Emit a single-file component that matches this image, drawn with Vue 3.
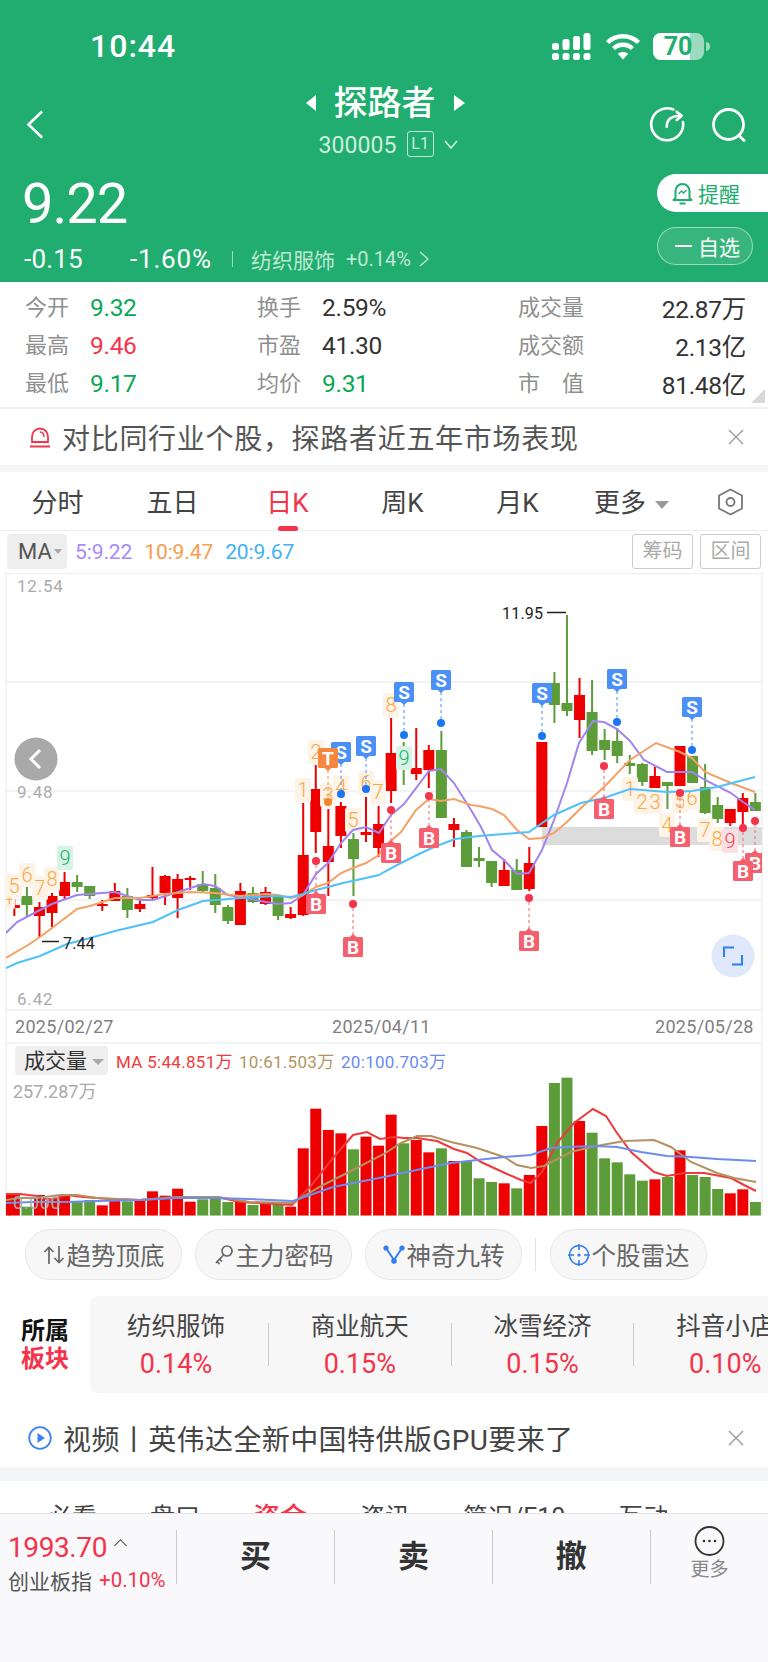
<script setup>
const stats = [
  { label: '今开', value: '9.32', tone: 'up', label2: '换手', value2: '2.59%', tone2: '', label3: '成交量', value3: '22.87万' },
  { label: '最高', value: '9.46', tone: 'down', label2: '市盈', value2: '41.30', tone2: '', label3: '成交额', value3: '2.13亿' },
  { label: '最低', value: '9.17', tone: 'up', label2: '均价', value2: '9.31', tone2: 'up', label3: '市　值', value3: '81.48亿' },
];
const periods = ['分时', '五日', '日K', '周K', '月K'];
const boards = [
  { name: '纺织服饰', pct: '0.14%' },
  { name: '商业航天', pct: '0.15%' },
  { name: '冰雪经济', pct: '0.15%' },
  { name: '抖音小店', pct: '0.10%' },
];

const cx = (i) => 14.33 + 12.56 * i;

// type, high, body top, body bottom, low
const candles = [
  ['r', 899, 905, 908, 916], ['g', 887, 896, 905, 917], ['r', 902, 907, 916, 937], ['r', 893, 896, 913, 927],
  ['r', 872, 882, 896, 899], ['g', 875, 882, 887, 892], ['g', 886, 886, 896, 899], ['r', 900, 904, 906, 911],
  ['r', 883, 891, 901, 901], ['g', 888, 896, 910, 918], ['r', 898, 904, 909, 912], ['r', 867, 895, 898, 899],
  ['r', 875, 876, 893, 905], ['r', 874, 879, 898, 918], ['r', 876, 878, 880, 890], ['g', 871, 884, 891, 892],
  ['g', 874, 888, 905, 913], ['g', 905, 907, 921, 924], ['r', 883, 891, 925, 925], ['g', 887, 893, 902, 903],
  ['r', 887, 892, 904, 905], ['g', 895, 896, 916, 920], ['r', 907, 914, 918, 919], ['r', 803, 855, 915, 916],
  ['r', 765, 789, 832, 853], ['r', 809, 846, 862, 896], ['r', 802, 806, 836, 848], ['g', 833, 839, 859, 896],
  ['r', 797, 832, 835, 842], ['r', 806, 824, 848, 857], ['r', 718, 753, 791, 803], ['g', 742, 750, 758, 785],
  ['r', 728, 768, 774, 780], ['r', 745, 750, 770, 788], ['g', 731, 750, 818, 818], ['r', 818, 824, 830, 847],
  ['g', 830, 832, 867, 867], ['g', 847, 858, 861, 867], ['g', 861, 861, 883, 887], ['r', 859, 870, 886, 886],
  ['g', 859, 870, 890, 890], ['r', 847, 863, 889, 891], ['r', 742, 742, 827, 827], ['g', 672, 683, 705, 723],
  ['g', 615, 703, 711, 716], ['r', 678, 695, 720, 738], ['g', 680, 712, 751, 755], ['g', 729, 740, 750, 760],
  ['g', 728, 741, 756, 763], ['g', 755, 763, 766, 774], ['g', 763, 764, 782, 786], ['r', 767, 776, 788, 788],
  ['g', 782, 782, 786, 809], ['r', 746, 746, 786, 786], ['g', 756, 756, 783, 783], ['g', 764, 787, 813, 814],
  ['g', 797, 805, 819, 823], ['r', 809, 809, 823, 826], ['r', 793, 798, 812, 825], ['g', 793, 802, 811, 811],
];

const volumeTops = [
  492, 530, 495, 505, 495, 514, 510, 526, 510, 514, 510, 484, 497, 476, 515, 508, 505, 516, 512, 525,
  522, 522, 530, 355, 236, 300, 310, 358, 320, 347, 254, 340, 330, 367, 355, 393, 393, 445, 456, 460,
  475, 435, 288, 159, 143, 273, 308, 385, 397, 433, 452, 448, 441, 361, 435, 441, 477, 490, 478, 516,
];

const line = (list) => list.map((p) => p.join(',')).join(' ');

const ma5 = line([[6,933],[17,922],[40,910],[52,904],[77,895],[115,892],[140,900],[153,900],[178,892],[203,884],[215,886],[228,895],[240,897],[266,902],[278,904],[291,903],[303,895],[316,874],[328,863],[341,843],[353,830],[366,827],[379,833],[391,815],[404,804],[429,771],[441,769],[454,783],[471,810],[481,827],[492,850],[504,860],[517,874],[529,873],[542,850],[554,820],[567,783],[579,743],[593,721],[604,722],[617,729],[630,741],[644,760],[667,772],[680,772],[692,772],[705,780],[731,793],[743,802],[755,810]]);
const ma10 = line([[6,958],[28,945],[40,937],[52,928],[77,909],[90,906],[115,898],[140,898],[165,894],[190,892],[215,893],[240,896],[266,894],[278,895],[291,898],[303,895],[316,887],[328,883],[341,873],[353,868],[366,863],[379,855],[384,847],[401,832],[416,810],[429,799],[441,801],[454,799],[471,805],[479,806],[492,809],[504,815],[517,830],[529,839],[542,838],[554,833],[567,822],[581,808],[604,787],[630,760],[656,743],[680,752],[692,758],[705,772],[731,783],[755,792]]);
const ma20 = line([[6,968],[17,963],[40,956],[67,944],[90,938],[115,931],[153,922],[178,910],[203,901],[228,899],[253,897],[278,896],[291,897],[303,894],[316,890],[328,887],[343,883],[366,878],[379,875],[384,872],[401,863],[417,855],[434,847],[455,839],[479,836],[504,834],[529,832],[554,815],[581,803],[604,798],[630,789],[667,792],[692,791],[717,787],[755,777]]);

const volRed = line([[6,1194],[20,1194],[37,1196],[50,1200],[67,1195],[83,1197],[110,1199],[140,1200],[177,1197],[217,1197],[240,1202],[292,1205],[310,1187],[333,1158],[353,1135],[367,1132],[380,1139],[394,1137],[404,1138],[417,1138],[437,1141],[454,1149],[467,1153],[481,1162],[507,1174],[521,1180],[531,1183],[542,1172],[557,1143],[574,1123],[593,1109],[606,1116],[617,1133],[631,1152],[654,1172],[667,1176],[684,1173],[704,1173],[731,1178],[744,1185],[756,1191]]);
const volTan = line([[6,1200],[20,1198],[37,1198],[60,1195],[77,1195],[97,1198],[140,1200],[177,1197],[217,1197],[250,1202],[292,1203],[323,1185],[347,1173],[384,1154],[401,1143],[417,1136],[431,1136],[451,1142],[477,1148],[504,1157],[517,1165],[531,1168],[544,1166],[571,1152],[591,1147],[624,1141],[654,1140],[671,1147],[691,1162],[717,1173],[734,1178],[756,1182]]);
const volBlue = line([[6,1203],[33,1202],[67,1202],[97,1201],[140,1200],[177,1198],[213,1198],[250,1199],[293,1201],[333,1187],[384,1177],[407,1172],[431,1167],[451,1163],[477,1160],[504,1157],[531,1155],[551,1148],[567,1147],[594,1146],[617,1147],[641,1152],[667,1156],[691,1157],[717,1159],[756,1161]]);

const signals = [
  { kind: 'S', x: 341, y: 752, dot: 794 }, { kind: 'S', x: 366, y: 746, dot: 789 },
  { kind: 'S', x: 404, y: 692, dot: 735 }, { kind: 'S', x: 441, y: 680, dot: 723 },
  { kind: 'S', x: 542, y: 693, dot: 736 }, { kind: 'S', x: 617, y: 679, dot: 722 },
  { kind: 'S', x: 692, y: 707, dot: 750 }, { kind: 'T', x: 328, y: 758, dot: 802 },
  { kind: 'B', x: 316, y: 904, dot: 861 }, { kind: 'B', x: 353, y: 947, dot: 904 },
  { kind: 'B', x: 391, y: 853, dot: 810 }, { kind: 'B', x: 429, y: 838, dot: 796 },
  { kind: 'B', x: 604, y: 809, dot: 766 }, { kind: 'B', x: 529, y: 941, dot: 898 },
  { kind: 'B', x: 680, y: 837, dot: 793 }, { kind: 'B', x: 755, y: 863, dot: 821 },
  { kind: 'B', x: 743, y: 871, dot: 828 },
];

const counts = [
  { n: 4, x: 7, y: 897 }, { n: 5, x: 14, y: 886 }, { n: 6, x: 27, y: 875 }, { n: 7, x: 40, y: 888 },
  { n: 8, x: 52, y: 879 }, { n: 9, x: 65, y: 858, tone: 'green' },
  { n: 1, x: 303, y: 790 }, { n: 2, x: 316, y: 752 }, { n: 3, x: 328, y: 795 }, { n: 4, x: 341, y: 787 },
  { n: 5, x: 353, y: 820 }, { n: 6, x: 366, y: 783 }, { n: 7, x: 378, y: 792 }, { n: 8, x: 391, y: 705 },
  { n: 9, x: 404, y: 758, tone: 'green' },
  { n: 1, x: 630, y: 789 }, { n: 2, x: 642, y: 802 }, { n: 3, x: 655, y: 802 }, { n: 4, x: 667, y: 825 },
  { n: 5, x: 680, y: 801 }, { n: 6, x: 692, y: 798 }, { n: 7, x: 705, y: 830 }, { n: 8, x: 717, y: 839 },
  { n: 9, x: 730, y: 841, tone: 'pink' },
];
</script>

<template>
  <div class="page">
    <header class="header">
      <div class="status">
        <span class="time">10:44</span>
        <div class="status-icons">
          <svg width="39" height="27" viewBox="0 0 39 27" fill="#fff">
            <rect x="0" y="10" width="7" height="7" rx="2.5" /><rect x="0" y="20" width="7" height="7" rx="2.5" />
            <rect x="10.5" y="6" width="7" height="11" rx="2.5" /><rect x="10.5" y="20" width="7" height="7" rx="2.5" />
            <rect x="21" y="3" width="7" height="14" rx="2.5" /><rect x="21" y="20" width="7" height="7" rx="2.5" />
            <rect x="31.5" y="0" width="7" height="17" rx="2.5" /><rect x="31.5" y="20" width="7" height="7" rx="2.5" />
          </svg>
          <svg class="wifi" width="36" height="27" viewBox="0 0 36 27" fill="none" stroke="#fff" stroke-width="4.4">
            <path d="M2.5 9.5C11 1.2 25 1.2 33.5 9.5" />
            <path d="M8.5 15.5C13.8 10.5 22.2 10.5 27.5 15.5" />
            <path d="M18 26.5L12.8 20.8C15.6 18.4 20.4 18.4 23.2 20.8Z" fill="#fff" stroke="none" />
          </svg>
          <svg class="battery" width="58" height="27" viewBox="0 0 58 27">
            <rect width="51" height="27" rx="8" fill="#9ddabf" />
            <path d="M8 0H37V27H8A8 8 0 0 1 0 19V8A8 8 0 0 1 8 0Z" fill="#fff" />
            <path d="M53 9C56 9.5 57 11 57 13.5S56 17.5 53 18Z" fill="#9ddabf" />
            <text class="battery-text" x="25" y="22" text-anchor="middle">70</text>
          </svg>
        </div>
      </div>

      <div class="nav">
        <svg class="back" width="18" height="29" viewBox="0 0 18 29" fill="none" stroke="#fff" stroke-width="2.6">
          <path d="M16 1.5L2.5 14.5L16 27.5" />
        </svg>
        <div class="nav-center">
          <div class="title-row">
            <span class="tri-left"></span>
            <span class="title">探路者</span>
            <span class="tri-right"></span>
          </div>
          <div class="code-row">
            <span class="code">300005</span>
            <span class="level">L1</span>
            <svg width="14" height="9" viewBox="0 0 14 9" fill="none" stroke="#cdeedf" stroke-width="1.6">
              <path d="M1 1L7 8L13 1" />
            </svg>
          </div>
        </div>
        <div class="nav-icons">
          <svg width="36" height="36" viewBox="0 0 36 36" fill="none" stroke="#fff" stroke-width="2.6" stroke-linecap="round">
            <path d="M24.3 3.5A16 16 0 1 0 34 16" />
            <path d="M17.7 20.7C17.7 14 21.5 10 31 9.7" />
            <path d="M27.7 5.7L32.7 9.7L27.7 14" stroke-linejoin="round" />
          </svg>
          <svg width="36" height="36" viewBox="0 0 36 36" fill="none" stroke="#fff" stroke-width="2.8">
            <circle cx="17.5" cy="18.5" r="15" />
            <path d="M28 29.5L33 34.5" stroke-linecap="round" />
          </svg>
        </div>
      </div>

      <div class="quote">
        <div class="quote-left">
          <div class="price">9.22</div>
          <div class="quote-sub">
            <span class="change">-0.15</span>
            <span class="change change-pct">-1.60%</span>
            <span class="quote-sep"></span>
            <span class="sector">纺织服饰</span>
            <span class="sector-pct">+0.14%</span>
            <svg width="10" height="16" viewBox="0 0 10 16" fill="none" stroke="#bfe8d4" stroke-width="1.4">
              <path d="M1 1L9 8L1 15" />
            </svg>
          </div>
        </div>
        <div class="quote-right">
          <div class="remind">
            <svg width="21" height="23" viewBox="0 0 21 23" fill="none" stroke="#21ad6f" stroke-width="2">
              <path d="M3.5 16V9.5C3.5 5 6.5 2 10.5 2S17.5 5 17.5 9.5V16L19.5 18H1.5Z" stroke-linejoin="round" />
              <path d="M7.5 21.5H13.5" />
              <path d="M6.5 12L9.5 9L11.5 11L14.5 8" stroke-width="1.4" />
            </svg>
            <span>提醒</span>
          </div>
          <div class="watch"><span class="watch-dash"></span><span>自选</span></div>
        </div>
      </div>
    </header>

    <section class="stats">
      <template v-for="row in stats" :key="row.label">
        <div class="stat">
          <span class="stat-label">{{ row.label }}</span>
          <span class="stat-value" :class="row.tone">{{ row.value }}</span>
        </div>
        <div class="stat">
          <span class="stat-label">{{ row.label2 }}</span>
          <span class="stat-value" :class="row.tone2">{{ row.value2 }}</span>
        </div>
        <div class="stat stat-wide">
          <span class="stat-label">{{ row.label3 }}</span>
          <span class="stat-value">{{ row.value3 }}</span>
        </div>
      </template>
      <span class="corner"></span>
    </section>

    <section class="banner">
      <svg width="22" height="21" viewBox="0 0 22 21" fill="none" stroke="#f0354b" stroke-width="1.8">
        <path d="M3 15V10C3 5 6.5 1.5 11 1.5S19 5 19 10V15Z" />
        <path d="M11 5C13.5 5.2 15 7 15 10" stroke-width="1.4" />
        <path d="M1 19.5H21" stroke-width="2" />
      </svg>
      <span class="banner-text">对比同行业个股，探路者近五年市场表现</span>
      <svg class="close" width="16" height="16" viewBox="0 0 16 16" stroke="#9a9a9a" stroke-width="1.4">
        <path d="M1 1L15 15M15 1L1 15" />
      </svg>
    </section>

    <nav class="periods">
      <span v-for="p in periods" :key="p" class="period" :class="{ active: p === '日K' }">{{ p }}</span>
      <span class="period period-more">更多<i class="more-tri"></i></span>
      <svg class="hex" width="27" height="28" viewBox="0 0 27 28" fill="none" stroke="#777" stroke-width="1.8">
        <path d="M13.5 1.5L25 7.5V20.5L13.5 26.5L2 20.5V7.5Z" stroke-linejoin="round" />
        <circle cx="13.5" cy="14" r="4" />
      </svg>
    </nav>

    <div class="ma-row">
      <div class="ma-chip">MA<i class="chip-tri"></i></div>
      <span class="ma-val c5">5:9.22</span>
      <span class="ma-val c10">10:9.47</span>
      <span class="ma-val c20">20:9.67</span>
      <span class="ma-btn first">筹码</span>
      <span class="ma-btn">区间</span>
    </div>

    <svg class="chart" width="768" height="643" viewBox="0 573 768 643">
      <defs>
        <clipPath id="plot"><rect x="6" y="573" width="756" height="643" /></clipPath>
      </defs>
      <g stroke="#efefef" stroke-width="1.4">
        <path d="M6 573.5H762M6 682H762M6 791H762M6 900H762M6 1010H762M6 1043H762M6 1216H762" fill="none" />
        <path d="M6 573V1216M762 573V1216" fill="none" />
      </g>

      <g clip-path="url(#plot)">
        <rect x="542" y="827" width="220" height="18" fill="#dcdcdc" />

        <g v-for="(c, i) in candles" :key="i" :class="c[0] === 'r' ? 'red' : 'green'">
          <rect class="wick" :x="cx(i) - 1" :y="c[1]" width="2" :height="c[4] - c[1]" />
          <rect class="wick" :x="cx(i) - 5.5" :y="c[2]" width="11" :height="c[3] - c[2]" />
        </g>

        <g v-for="(m, i) in counts" :key="'n' + i">
          <rect :x="m.x - 8" :y="m.y - 12" width="16" height="24" rx="2" :class="['count-bg', m.tone]" />
          <text :x="m.x" :y="m.y + 7" text-anchor="middle" :class="['count', m.tone]">{{ m.n }}</text>
        </g>

        <polyline :points="ma5" fill="none" stroke="#a184ee" stroke-width="2" />
        <polyline :points="ma10" fill="none" stroke="#f5a165" stroke-width="2" />
        <polyline :points="ma20" fill="none" stroke="#4fc1fb" stroke-width="2" />

        <g v-for="(s, i) in signals" :key="'s' + i" :class="'sig-' + s.kind">
          <line class="sig-dash" :x1="s.x" :x2="s.x" :y1="s.y" :y2="s.dot" stroke-width="1" stroke-dasharray="3 3" />
          <circle class="sig-dot" :cx="s.x" :cy="s.dot" r="4" />
          <rect class="sig-box" :x="s.x - 10" :y="s.y - 10" width="20" height="20" rx="1.5" />
          <path v-if="s.kind === 'B'" class="sig-box" :d="`M${s.x - 4} ${s.y - 9.5}L${s.x} ${s.y - 13}L${s.x + 4} ${s.y - 9.5}Z`" />
          <path v-else class="sig-box" :d="`M${s.x - 4} ${s.y + 9.5}L${s.x} ${s.y + 13}L${s.x + 4} ${s.y + 9.5}Z`" />
          <text class="sig-text" :x="s.x" :y="s.y + 6.5" text-anchor="middle">{{ s.kind }}</text>
        </g>
      </g>

      <text class="axis" x="17" y="592">12.54</text>
      <text class="axis" x="17" y="798">9.48</text>
      <text class="axis" x="17" y="1005">6.42</text>
      <text class="extreme" x="502" y="619">11.95</text>
      <path d="M547 612.5H566M42 941.5H59" stroke="#222" stroke-width="1.6" />
      <text class="extreme" x="63" y="949">7.44</text>

      <circle cx="36" cy="759" r="21.5" fill="#a9a9a9" />
      <path d="M40 750L31 759L40 768" fill="none" stroke="#fff" stroke-width="3" />

      <circle cx="733" cy="956" r="21.5" fill="#dfe9fb" />
      <path d="M724 957V947.5H734M742 955V964.5H732" fill="none" stroke="#2f7cf6" stroke-width="2" />

      <text class="date" x="15" y="1033">2025/02/27</text>
      <text class="date" x="332" y="1033">2025/04/11</text>
      <text class="date" x="655" y="1033">2025/05/28</text>

      <rect x="15" y="1046" width="93" height="29" rx="3" fill="#eeeeee" />
      <text class="vol-title" x="24" y="1068">成交量</text>
      <path d="M92 1059H104L98 1065Z" fill="#aaa" />
      <text class="vol-ma vm5" x="116" y="1068">MA 5:44.851万</text>
      <text class="vol-ma vm10" x="239" y="1068">10:61.503万</text>
      <text class="vol-ma vm20" x="341" y="1068">20:100.703万</text>

      <g clip-path="url(#plot)">
        <rect
          v-for="(top, i) in volumeTops"
          :key="'v' + i"
          :class="candles[i][0] === 'r' ? 'red' : 'green'"
          :x="cx(i) - 5.5"
          :y="1030 + top / 3"
          width="11"
          :height="1215.5 - (1030 + top / 3)"
        />
        <rect class="red" x="6" y="1194" width="4" height="21.5" />
        <polyline :points="volRed" fill="none" stroke="#ee3a3a" stroke-width="2" />
        <polyline :points="volTan" fill="none" stroke="#b3925f" stroke-width="2" />
        <polyline :points="volBlue" fill="none" stroke="#6e8cee" stroke-width="2" />
      </g>
      <text class="vol-axis" x="13" y="1098">257.287万</text>
      <text class="vol-zero" x="13" y="1209">0.000</text>
    </svg>

    <div class="tools">
      <div class="tool">
        <svg width="22" height="18" viewBox="0 0 22 18" fill="none" stroke="#666" stroke-width="1.7">
          <path d="M6 18V2M1.5 6L6 1.5L10.5 6M16 0V16M11.5 12L16 16.5L20.5 12" />
        </svg>
        <span>趋势顶底</span>
      </div>
      <div class="tool">
        <svg width="20" height="22" viewBox="0 0 20 22" fill="none" stroke="#666" stroke-width="1.7">
          <circle cx="13" cy="7" r="5" />
          <path d="M9.5 11L2 19M2.5 17L5.5 20M5 14.5L8 17.5" />
        </svg>
        <span>主力密码</span>
      </div>
      <div class="tool">
        <svg width="22" height="20" viewBox="0 0 22 20" fill="none" stroke="#2f7cf6" stroke-width="2">
          <path d="M3 3L11 15L19 3" />
          <circle cx="3" cy="3" r="2.6" fill="#2f7cf6" stroke="none" />
          <circle cx="19" cy="3" r="2.6" fill="#2f7cf6" stroke="none" />
          <circle cx="11" cy="16" r="2.8" fill="#2f7cf6" stroke="none" />
        </svg>
        <span>神奇九转</span>
      </div>
      <span class="tool-sep"></span>
      <div class="tool">
        <svg width="22" height="22" viewBox="0 0 22 22" fill="none" stroke="#2f7cf6" stroke-width="1.6">
          <circle cx="11" cy="11" r="9.5" />
          <path d="M11 0V6M11 16V22M0 11H6M16 11H22" />
          <circle cx="11" cy="11" r="1.6" fill="#2f7cf6" stroke="none" />
        </svg>
        <span>个股雷达</span>
      </div>
    </div>

    <section class="boards">
      <div class="boards-label"><span>所属</span><span class="red-text">板块</span></div>
      <div class="boards-list">
        <template v-for="(b, i) in boards" :key="b.name">
          <span v-if="i" class="board-sep"></span>
          <div class="board">
            <span class="board-name">{{ b.name }}</span>
            <span class="board-pct">{{ b.pct }}</span>
          </div>
        </template>
      </div>
    </section>

    <section class="news">
      <svg width="24" height="24" viewBox="0 0 24 24" fill="none" stroke="#3b82f6" stroke-width="1.8">
        <circle cx="12" cy="12" r="10.8" />
        <path d="M9.5 7L17 12L9.5 17Z" fill="#3b82f6" stroke="none" />
      </svg>
      <span class="news-text">视频丨英伟达全新中国特供版GPU要来了</span>
      <svg class="close" width="16" height="16" viewBox="0 0 16 16" stroke="#9a9a9a" stroke-width="1.4">
        <path d="M1 1L15 15M15 1L1 15" />
      </svg>
    </section>

    <div class="gap"></div>

    <nav class="info-tabs">
      <span>必看</span>
      <span>盘口</span>
      <span class="active">资金</span>
      <span>资讯</span>
      <span>简况/F10</span>
      <span>互动</span>
    </nav>

    <footer class="bottom">
      <div class="index">
        <div class="index-top"><span class="index-num">1993.70</span><i class="caret"></i></div>
        <div class="index-sub"><span>创业板指</span><span class="index-pct">+0.10%</span></div>
      </div>
      <span class="action">买</span>
      <span class="action">卖</span>
      <span class="action">撤</span>
      <div class="action more">
        <svg width="31" height="30" viewBox="0 0 31 30" fill="none" stroke="#333" stroke-width="1.8">
          <circle cx="15.5" cy="15" r="14" />
          <circle cx="10" cy="15" r="1.3" fill="#333" stroke="none" />
          <circle cx="15.5" cy="15" r="1.3" fill="#333" stroke="none" />
          <circle cx="21" cy="15" r="1.3" fill="#333" stroke="none" />
        </svg>
        <span>更多</span>
      </div>
    </footer>
  </div>
</template>

<style>
html, body {
  margin: 0;
  background: #fff;
}
</style>

<style scoped>
.page {
  position: relative;
  width: 768px;
  height: 1662px;
  overflow: hidden;
  background: #fff;
  font-family: Roboto, "Noto Sans CJK SC", sans-serif;
  color: #333;
}

.header {
  height: 282px;
  background: #21ad6f;
  color: #fff;
  box-sizing: border-box;
  padding-top: 29px;
}

.status {
  display: flex;
  align-items: center;
  height: 34px;
}

.time {
  margin-left: 90px;
  font-size: 32px;
  font-weight: 500;
  letter-spacing: 1px;
  line-height: 34px;
}

.status-icons {
  display: flex;
  align-items: center;
  margin-left: auto;
  margin-right: 57px;
}

.wifi {
  margin-left: 14px;
}

.battery {
  margin-left: 12px;
}

.battery-text {
  font-size: 25px;
  font-weight: 700;
  fill: #21ad6f;
  font-family: Roboto, sans-serif;
}

.nav {
  position: relative;
  display: flex;
  justify-content: center;
  height: 78px;
  margin-top: 20px;
}

.back {
  position: absolute;
  left: 26px;
  top: 27px;
}

.nav-center {
  display: flex;
  flex-direction: column;
  align-items: center;
  margin-left: 2px;
}

.title-row {
  display: flex;
  align-items: center;
  height: 40px;
  gap: 18px;
}

.title {
  font-size: 34px;
  font-weight: 500;
  line-height: 40px;
}

.tri-left, .tri-right {
  width: 0;
  height: 0;
  border-top: 8px solid transparent;
  border-bottom: 8px solid transparent;
}

.tri-left {
  border-right: 10px solid #fff;
}

.tri-right {
  border-left: 11px solid #fff;
}

.code-row {
  display: flex;
  align-items: center;
  height: 26px;
  margin-top: 8px;
  margin-left: 6px;
  gap: 10px;
  color: #cdeedf;
}

.code {
  font-size: 23px;
  letter-spacing: 0.1px;
  margin-top: 3px;
}

.level {
  width: 27px;
  height: 26px;
  box-sizing: border-box;
  border: 1px solid #bfe8d4;
  border-radius: 3px;
  text-align: center;
  line-height: 24px;
  font-size: 16px;
}

.nav-icons {
  position: absolute;
  right: 21px;
  top: 23px;
  display: flex;
  gap: 26px;
}

.quote {
  display: flex;
  justify-content: space-between;
  height: 91px;
  margin-top: 13px;
}

.quote-left {
  padding-left: 22px;
}

.price {
  font-size: 56px;
  line-height: 56px;
  letter-spacing: -1px;
  margin-top: 2px;
}

.quote-sub {
  display: flex;
  align-items: center;
  height: 30px;
  margin-top: 12px;
  margin-left: 2px;
  font-size: 26px;
}

.change {
  width: 106px;
  letter-spacing: 0.2px;
}

.change-pct {
  width: 102px;
  letter-spacing: 0.8px;
}

.quote-sep {
  width: 1px;
  height: 16px;
  background: #9ddabf;
}

.sector {
  margin-left: 18px;
  font-size: 21px;
  color: #bfe8d4;
}

.sector-pct {
  margin-left: 11px;
  margin-right: 8px;
  font-size: 20px;
  color: #bfe8d4;
}

.quote-right {
  display: flex;
  flex-direction: column;
  align-items: flex-start;
  width: 111px;
}

.remind {
  display: flex;
  align-items: center;
  width: 111px;
  height: 38px;
  box-sizing: border-box;
  padding-left: 15px;
  gap: 5px;
  background: #fff;
  border-radius: 19px 0 0 19px;
  color: #21ad6f;
  font-size: 21px;
}

.watch {
  display: flex;
  align-items: center;
  width: 96px;
  height: 38px;
  margin-top: 15px;
  box-sizing: border-box;
  padding-left: 17px;
  gap: 6px;
  background: rgba(255, 255, 255, 0.1);
  border: 1px solid rgba(255, 255, 255, 0.5);
  border-radius: 19px;
  font-size: 21px;
}

.watch-dash {
  width: 17px;
  height: 2px;
  background: #fff;
}

.stats {
  position: relative;
  display: grid;
  grid-template-columns: 232px 261px 228px;
  grid-auto-rows: 38px;
  height: 127px;
  box-sizing: border-box;
  padding: 5px 0 0 25px;
  border-bottom: 2px solid #f0f0f0;
}

.stat {
  display: flex;
  align-items: center;
}

.stat-label {
  width: 65px;
  margin-bottom: 3px;
  font-size: 22px;
  color: #8f8f8f;
}

.stat-value {
  margin-top: 2px;
  font-size: 24.5px;
  letter-spacing: -0.3px;
  color: #333;
}

.stat-wide {
  justify-content: space-between;
}

.stat-wide .stat-label {
  width: 68px;
  white-space: nowrap;
}

.up {
  color: #08a952;
}

.down {
  color: #f5334a;
}

.corner {
  position: absolute;
  right: 3px;
  bottom: 4px;
  width: 0;
  height: 0;
  border-left: 14px solid transparent;
  border-bottom: 14px solid #d8d8d8;
}

.banner {
  display: flex;
  align-items: center;
  height: 56px;
  padding-left: 29px;
}

.banner-text {
  margin-left: 11px;
  font-size: 28px;
  color: #555;
  letter-spacing: 0.7px;
}

.close {
  margin-left: auto;
  margin-right: 24px;
  flex: none;
}

.periods {
  position: relative;
  display: grid;
  grid-template-columns: repeat(6, 115px) 1fr;
  align-items: center;
  height: 66px;
  box-sizing: border-box;
  padding-bottom: 2px;
  border-top: 7px solid #f4f5f7;
  border-bottom: 1px solid #eeeeee;
}

.period {
  text-align: center;
  font-size: 26px;
  color: #444;
}

.period.active {
  color: #f5334a;
}

.period.active::after {
  content: "";
  position: absolute;
  left: 278px;
  bottom: -1px;
  width: 20px;
  height: 5px;
  border-radius: 3px;
  background: #f5334a;
}

.period-more {
  margin-left: -2px;
  white-space: nowrap;
}

.more-tri {
  display: inline-block;
  margin-left: 9px;
  vertical-align: 3px;
  width: 0;
  height: 0;
  border-left: 7px solid transparent;
  border-right: 7px solid transparent;
  border-top: 8px solid #999;
}

.hex {
  margin-left: 27px;
  margin-top: 4px;
}

.ma-row {
  display: flex;
  align-items: center;
  height: 42px;
  box-sizing: border-box;
  padding: 3px 7px 4px;
  font-size: 21px;
}

.ma-chip {
  display: flex;
  align-items: center;
  width: 60px;
  height: 35px;
  box-sizing: border-box;
  padding-left: 11px;
  background: #eeeeee;
  border-radius: 4px;
  font-size: 22px;
  color: #555;
  margin-right: 8px;
}

.chip-tri {
  margin-left: 2px;
  width: 0;
  height: 0;
  border-left: 4px solid transparent;
  border-right: 4px solid transparent;
  border-top: 5px solid #aaa;
}

.ma-val {
  margin-right: 12px;
  letter-spacing: -0.1px;
}

.c5 {
  color: #a78bfa;
}

.c10 {
  color: #f79d4b;
}

.c20 {
  color: #3fb1f5;
}

.ma-btn {
  width: 61px;
  height: 35px;
  box-sizing: border-box;
  margin-left: 7px;
  border: 1px solid #cccccc;
  border-radius: 3px;
  text-align: center;
  line-height: 33px;
  font-size: 20px;
  color: #aaaaaa;
}

.ma-btn.first {
  margin-left: auto;
}

.chart {
  display: block;
}

.red {
  fill: #ee0000;
}

.green {
  fill: #5c9c39;
}

.count-bg {
  fill: #fdf3e6;
}

.count-bg.green {
  fill: #d8f2e5;
}

.count-bg.pink {
  fill: #fbdfe2;
}

.count {
  font-size: 20px;
  font-weight: 300;
  fill: #f9a84a;
}

.count.green {
  fill: #15b36c;
}

.count.pink {
  fill: #f0445a;
}

.sig-S .sig-box {
  fill: #4a90f8;
}

.sig-S .sig-dash {
  stroke: #4a90f8;
}

.sig-S .sig-dot {
  fill: #1b76f5;
}

.sig-T .sig-box {
  fill: #f5873f;
}

.sig-T .sig-dash {
  stroke: #f5873f;
}

.sig-T .sig-dot {
  fill: #f5852a;
}

.sig-B .sig-box {
  fill: #f6606e;
}

.sig-B .sig-dash {
  stroke: #f6606e;
}

.sig-B .sig-dot {
  fill: #f5334a;
}

.sig-text {
  font-size: 19px;
  font-weight: 700;
  fill: #fff;
}

.axis {
  font-size: 17px;
  fill: #aaaaaa;
  letter-spacing: 0.8px;
}

.extreme {
  font-size: 16px;
  fill: #222;
  letter-spacing: 0.2px;
}

.date {
  font-size: 18px;
  fill: #808080;
  letter-spacing: 0.3px;
}

.vol-title {
  font-size: 21px;
  fill: #333;
}

.vol-ma {
  font-size: 17px;
  letter-spacing: 0.3px;
}

.vm5 {
  fill: #f03a3a;
}

.vm10 {
  fill: #b5935f;
}

.vm20 {
  fill: #6a8cf0;
}

.vol-axis {
  font-size: 18px;
  fill: #aaaaaa;
}

.vol-zero {
  font-size: 18px;
  fill: #aaaaaa;
  letter-spacing: 0.6px;
}

.tools {
  display: flex;
  align-items: center;
  height: 51px;
  margin-top: 13px;
  padding-left: 25px;
  gap: 13px;
}

.tool {
  display: flex;
  align-items: center;
  justify-content: center;
  gap: 2px;
  width: 157px;
  height: 51px;
  box-sizing: border-box;
  background: #f7f7f7;
  border: 1px solid #e8e8e8;
  border-radius: 25px;
  font-size: 24.5px;
  color: #666;
}

.tool-sep {
  width: 1px;
  height: 33px;
  margin-right: 1px;
  background: #e2e2e2;
}

.boards {
  display: flex;
  height: 97px;
  margin-top: 16px;
}

.boards-label {
  display: flex;
  flex-direction: column;
  justify-content: center;
  width: 69px;
  padding-left: 21px;
  font-size: 24px;
  font-weight: 700;
  line-height: 28px;
  color: #111;
}

.red-text {
  color: #f5334a;
}

.boards-list {
  display: flex;
  align-items: center;
  flex: 1;
  overflow: hidden;
  background: #f7f7f7;
  border-radius: 8px 0 0 8px;
}

.board {
  flex: 0 0 181.7px;
  box-sizing: border-box;
  display: flex;
  flex-direction: column;
  align-items: center;
  gap: 6px;
  margin-top: 3px;
  white-space: nowrap;
}

.board:first-child {
  flex-basis: 178px;
  padding-right: 6px;
}

.board-sep {
  flex: none;
  width: 1px;
  height: 43px;
  background: #cccccc;
}

.board-name {
  font-size: 24.5px;
  line-height: 30px;
  color: #444;
}

.board-pct {
  font-size: 27px;
  line-height: 32px;
  color: #f5334a;
}

.news {
  display: flex;
  align-items: center;
  height: 58px;
  padding: 16px 0 0 28px;
}

.news-text {
  margin-left: 11px;
  font-size: 28px;
  letter-spacing: 0.4px;
  color: #444;
  white-space: nowrap;
}

.gap {
  height: 14px;
  background: #f4f5f7;
}

.info-tabs {
  display: flex;
  align-items: center;
  gap: 53px;
  padding: 22px 0 0 47px;
  font-size: 25px;
  color: #444;
  line-height: 30px;
}

.info-tabs .active {
  color: #f5334a;
  font-size: 27px;
  font-weight: 500;
}

.bottom {
  position: absolute;
  left: 0;
  right: 0;
  bottom: 0;
  display: flex;
  align-items: flex-start;
  height: 149px;
  box-sizing: border-box;
  padding-top: 16px;
  background: #f9f9fb;
  border-top: 1px solid #e5e5e5;
}

.index {
  width: 176px;
  box-sizing: border-box;
  padding-left: 8px;
  flex: none;
}

.index-top {
  display: flex;
  align-items: center;
  height: 34px;
}

.index-num {
  font-size: 28px;
  color: #f5334a;
  letter-spacing: -0.4px;
}

.caret {
  margin-left: 9px;
  margin-top: -4px;
  width: 8px;
  height: 8px;
  border-left: 1.5px solid #444;
  border-top: 1.5px solid #444;
  transform: rotate(45deg);
}

.index-sub {
  display: flex;
  align-items: center;
  height: 32px;
  font-size: 21px;
  color: #555;
  white-space: nowrap;
}

.index-pct {
  margin-left: 7px;
  font-size: 20.5px;
  color: #f5334a;
}

.action {
  width: 158px;
  height: 54px;
  border-left: 1px solid #cccccc;
  text-align: center;
  line-height: 54px;
  font-size: 31px;
  font-weight: 700;
  color: #333;
}

.more {
  display: flex;
  flex-direction: column;
  align-items: center;
  width: 118px;
  font-size: 19px;
  font-weight: 400;
  line-height: 24px;
  color: #888;
}

.more svg {
  margin-top: -4px;
  margin-bottom: 2px;
}
</style>
